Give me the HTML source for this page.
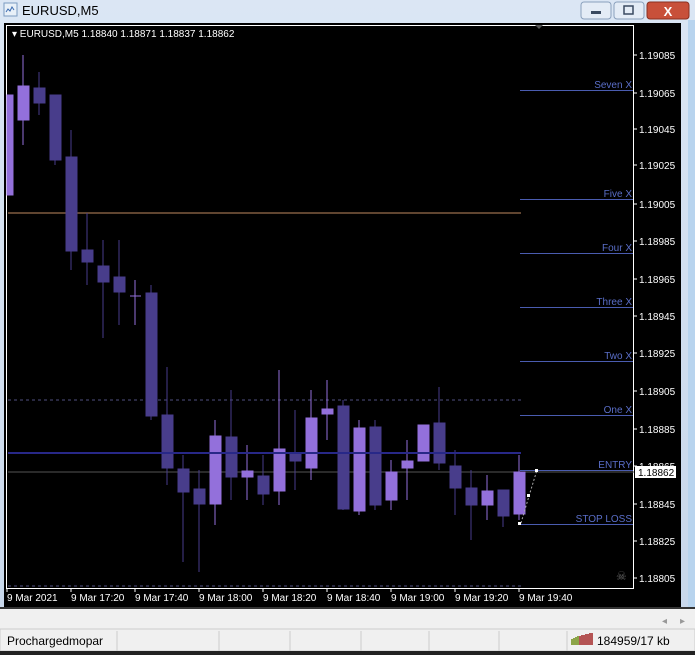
<!DOCTYPE html>
<html><head><style>
body{margin:0;width:695px;height:655px;overflow:hidden;background:#dfe8f3;font-family:"Liberation Sans",sans-serif}
svg{display:block}
</style></head><body>
<svg width="695" height="655" viewBox="0 0 695 655" xmlns="http://www.w3.org/2000/svg" font-family="Liberation Sans, sans-serif">
<defs><linearGradient id="tb" x1="0" y1="0" x2="0" y2="1"><stop offset="0" stop-color="#dbe6f4"/><stop offset="1" stop-color="#c6d6ea"/></linearGradient></defs>
<rect x="0" y="0" width="695" height="655" fill="url(#tb)"/>
<rect x="688" y="20" width="7" height="590" fill="#b8d4ee"/>
<!-- title -->
<rect x="4" y="3" width="13" height="13" fill="#e8f0f8" stroke="#7a9ac0"/>
<path d="M6 12 l2-3 2 2 2-4 2 3" stroke="#3a6ab0" fill="none"/>
<text x="22" y="15" font-size="13" fill="#000">EURUSD,M5</text>
<rect x="581" y="2" width="30" height="17" rx="3" fill="#e4ecf6" stroke="#8aa0bc"/>
<rect x="591" y="11" width="10" height="3" fill="#3a4a60"/>
<rect x="614" y="2" width="30" height="17" rx="3" fill="#e4ecf6" stroke="#8aa0bc"/>
<rect x="624" y="6" width="9" height="8" fill="none" stroke="#3a4a60" stroke-width="1.5"/>
<rect x="647" y="2" width="42" height="17" rx="3" fill="#c8503a" stroke="#8a3020"/>
<text x="668" y="16" font-size="13" font-weight="bold" fill="#fff" text-anchor="middle">X</text>
<!-- chart bg -->
<rect x="4" y="23" width="677" height="584" fill="#000"/>
<rect x="6.5" y="25.5" width="627" height="563" fill="none" stroke="#fff" stroke-width="1"/>
<path d="M535 25 l4 4 4-4z" fill="#555"/>
<text x="12" y="37" font-size="10" fill="#fff">▾ EURUSD,M5  1.18840 1.18871 1.18837 1.18862</text>
<!-- price axis -->
<g font-size="10" fill="#fff">
<text x="639" y="59">1.19085</text><text x="639" y="97">1.19065</text><text x="639" y="133">1.19045</text><text x="639" y="169">1.19025</text><text x="639" y="208">1.19005</text><text x="639" y="245">1.18985</text><text x="639" y="283">1.18965</text><text x="639" y="320">1.18945</text><text x="639" y="357">1.18925</text><text x="639" y="395">1.18905</text><text x="639" y="433">1.18885</text><text x="639" y="470">1.18865</text><text x="639" y="508">1.18845</text><text x="639" y="545">1.18825</text><text x="639" y="582">1.18805</text>
</g>
<g stroke="#fff"><path d="M634 55h3M634 93h3M634 129h3M634 165h3M634 204h3M634 241h3M634 279h3M634 316h3M634 353h3M634 391h3M634 429h3M634 466h3M634 504h3M634 541h3M634 578h3"/></g>
<!-- time axis -->
<g font-size="10" fill="#fff">
<text x="7" y="601">9 Mar 2021</text><text x="71" y="601">9 Mar 17:20</text><text x="135" y="601">9 Mar 17:40</text><text x="199" y="601">9 Mar 18:00</text><text x="263" y="601">9 Mar 18:20</text><text x="327" y="601">9 Mar 18:40</text><text x="391" y="601">9 Mar 19:00</text><text x="455" y="601">9 Mar 19:20</text><text x="519" y="601">9 Mar 19:40</text>
</g>
<g stroke="#fff"><path d="M7 588v4M71 588v4M135 588v4M199 588v4M263 588v4M327 588v4M391 588v4M455 588v4M519 588v4"/></g>
<!-- lines -->
<line x1="8" y1="213" x2="521" y2="213" stroke="#c08a60"/>
<line x1="8" y1="400" x2="521" y2="400" stroke="#505080" stroke-dasharray="3,3"/>
<line x1="8" y1="586" x2="521" y2="586" stroke="#505080" stroke-dasharray="3,3"/>
<line x1="8" y1="472" x2="634" y2="472" stroke="#555"/>
<!-- candles -->
<g id="c">
<g stroke="#9370db" fill="#9370db">
<rect x="7" y="95" width="6" height="100"/>
<line x1="23" y1="55" x2="23" y2="145"/><rect x="18" y="86" width="11" height="34"/>
<line x1="135" y1="280" x2="135" y2="325"/><line x1="130" y1="296" x2="141" y2="296"/>
<line x1="215" y1="420" x2="215" y2="525"/><rect x="210" y="436" width="11" height="68"/>
<line x1="247" y1="445" x2="247" y2="500"/><rect x="242" y="471" width="11" height="6"/>
<line x1="279" y1="370" x2="279" y2="505"/><rect x="274" y="449" width="11" height="42"/>
<line x1="311" y1="390" x2="311" y2="480"/><rect x="306" y="418" width="11" height="50"/>
<line x1="327" y1="380" x2="327" y2="440"/><rect x="322" y="409" width="11" height="5"/>
<line x1="359" y1="420" x2="359" y2="515"/><rect x="354" y="428" width="11" height="83"/>
<line x1="391" y1="460" x2="391" y2="510"/><rect x="386" y="472" width="11" height="28"/>
<line x1="407" y1="440" x2="407" y2="500"/><rect x="402" y="461" width="11" height="7"/>
<line x1="423" y1="425" x2="423" y2="461"/><rect x="418" y="425" width="11" height="36"/>
<line x1="487" y1="475" x2="487" y2="520"/><rect x="482" y="491" width="11" height="14"/>
<line x1="519" y1="455" x2="519" y2="520"/><rect x="514" y="472" width="11" height="42"/>
</g>
<g stroke="#483d8b" fill="#483d8b">
<line x1="39" y1="72" x2="39" y2="115"/><rect x="34" y="88" width="11" height="15"/>
<line x1="55" y1="95" x2="55" y2="165"/><rect x="50" y="95" width="11" height="65"/>
<line x1="71" y1="130" x2="71" y2="270"/><rect x="66" y="157" width="11" height="94"/>
<line x1="87" y1="213" x2="87" y2="285"/><rect x="82" y="250" width="11" height="12"/>
<line x1="103" y1="240" x2="103" y2="338"/><rect x="98" y="266" width="11" height="16"/>
<line x1="119" y1="240" x2="119" y2="325"/><rect x="114" y="277" width="11" height="15"/>
<line x1="151" y1="285" x2="151" y2="420"/><rect x="146" y="293" width="11" height="123"/>
<line x1="167" y1="367" x2="167" y2="485"/><rect x="162" y="415" width="11" height="53"/>
<line x1="183" y1="455" x2="183" y2="562"/><rect x="178" y="469" width="11" height="23"/>
<line x1="199" y1="470" x2="199" y2="572"/><rect x="194" y="489" width="11" height="15"/>
<line x1="231" y1="390" x2="231" y2="500"/><rect x="226" y="437" width="11" height="40"/>
<line x1="263" y1="455" x2="263" y2="505"/><rect x="258" y="476" width="11" height="18"/>
<line x1="295" y1="410" x2="295" y2="490"/><rect x="290" y="453" width="11" height="8"/>
<line x1="343" y1="400" x2="343" y2="510"/><rect x="338" y="406" width="11" height="103"/>
<line x1="375" y1="420" x2="375" y2="510"/><rect x="370" y="427" width="11" height="78"/>
<line x1="439" y1="387" x2="439" y2="470"/><rect x="434" y="423" width="11" height="40"/>
<line x1="455" y1="450" x2="455" y2="515"/><rect x="450" y="466" width="11" height="22"/>
<line x1="471" y1="470" x2="471" y2="540"/><rect x="466" y="488" width="11" height="17"/>
<line x1="503" y1="490" x2="503" y2="527"/><rect x="498" y="490" width="11" height="26"/>
</g>
</g>
<line x1="8" y1="453" x2="521" y2="453" stroke="#282888" stroke-width="2"/>
<!-- levels -->
<g stroke="#4a5cb0"><path d="M520 90.5h113M520 199.5h113M520 253.5h113M520 307.5h113M520 361.5h113M520 415.5h113M520 470.5h113M520 524.5h113"/></g>
<g font-size="10" fill="#5a6ec8" text-anchor="end">
<text x="632" y="88">Seven X</text><text x="632" y="197">Five X</text><text x="632" y="251">Four X</text><text x="632" y="305">Three X</text><text x="632" y="359">Two X</text><text x="632" y="413">One X</text><text x="632" y="468">ENTRY</text><text x="632" y="522">STOP LOSS</text>
</g>
<path d="M521 523 L529 496 L537 470" stroke="#aaa" stroke-dasharray="2,2" fill="none"/>
<rect x="527" y="494" width="3" height="3" fill="#fff"/><rect x="535" y="469" width="3" height="3" fill="#fff"/><rect x="518" y="522" width="3" height="3" fill="#fff"/>
<rect x="635" y="466" width="41" height="12" fill="#fff"/>
<text x="638" y="476" font-size="10" fill="#000">1.18862</text>
<text x="616" y="580" font-size="12" fill="#666">☠</text>
<!-- bottom -->
<rect x="0" y="607" width="695" height="2" fill="#333"/>
<rect x="0" y="609" width="695" height="20" fill="#f0f0f0"/>
<text x="662" y="624" font-size="10" fill="#999">◂</text><text x="680" y="624" font-size="10" fill="#999">▸</text>
<rect x="0" y="629" width="695" height="22" fill="#f0f0f0" stroke="#ccc"/>
<g stroke="#ccc"><path d="M117 631v20M219 631v20M290 631v20M361 631v20M429 631v20M499 631v20M567 631v20"/></g>
<text x="7" y="645" font-size="12" fill="#000">Prochargedmopar</text>
<g stroke-width="1.5"><path d="M572 645v-6M574 645v-7M576 645v-8M578 645v-9" stroke="#6a8a10"/><path d="M580 645v-9M582 645v-10M584 645v-10M586 645v-11M588 645v-11M590 645v-12M592 645v-12" stroke="#a02020"/></g>
<text x="597" y="645" font-size="12" fill="#000">184959/17 kb</text>
<rect x="0" y="651" width="695" height="4" fill="#222"/>
</svg>
</body></html>
